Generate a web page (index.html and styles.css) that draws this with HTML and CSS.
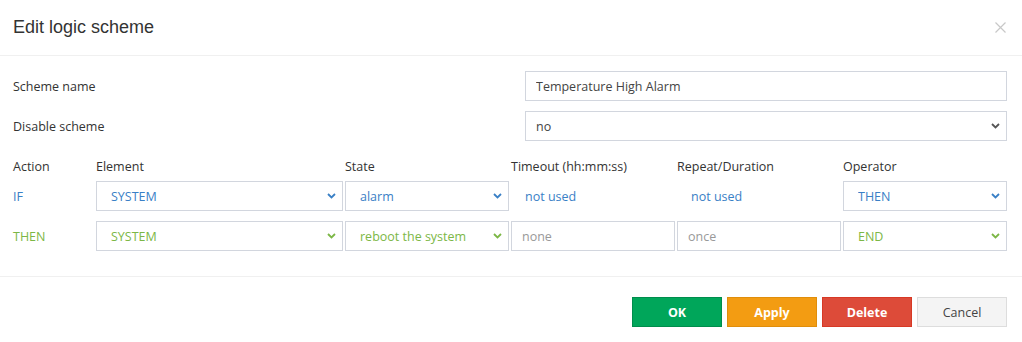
FILE: index.html
```html
<!DOCTYPE html>
<html lang="en">
<head>
    <meta charset="UTF-8">
    <title>Edit logic scheme</title>
    <link rel="stylesheet" href="styles.css">
</head>
<body>
    <div class="modal">
        <!-- Cabeçalho -->
        <div class="modal-header">
            <h4 class="modal-title">Edit logic scheme</h4>
            <button class="close" type="button" aria-label="Close">
                <svg width="11" height="11" viewBox="0 0 11 11">
                    <path d="M0.5 0.5 L10.5 10.5 M10.5 0.5 L0.5 10.5" stroke="#c8c8c8" stroke-width="1.2" fill="none"/>
                </svg>
            </button>
        </div>

        <!-- Corpo do formulário -->
        <div class="modal-body">
            <div class="form-row">
                <label class="form-label">Scheme name</label>
                <input class="field" type="text" value="Temperature High Alarm">
            </div>
            <div class="form-row">
                <label class="form-label">Disable scheme</label>
                <div class="select-wrap">
                    <select class="field field-select plain">
                        <option>no</option>
                        <option>yes</option>
                    </select>
                    <svg class="chevron" width="9" height="6" viewBox="0 0 9 6"><path d="M1 1 L4.5 4.5 L8 1" stroke="#555" stroke-width="1.8" fill="none"/></svg>
                </div>
            </div>

            <div class="rule-grid rule-head">
                <span>Action</span>
                <span>Element</span>
                <span>State</span>
                <span>Timeout (hh:mm:ss)</span>
                <span>Repeat/Duration</span>
                <span>Operator</span>
            </div>

            <div class="rule-grid rule-row if-row">
                <span class="action">IF</span>
                <div class="select-wrap">
                    <select class="field field-select"><option>SYSTEM</option></select>
                    <svg class="chevron" width="9" height="6" viewBox="0 0 9 6"><path d="M1 1 L4.5 4.5 L8 1" stroke="currentColor" stroke-width="1.8" fill="none"/></svg>
                </div>
                <div class="select-wrap">
                    <select class="field field-select"><option>alarm</option></select>
                    <svg class="chevron" width="9" height="6" viewBox="0 0 9 6"><path d="M1 1 L4.5 4.5 L8 1" stroke="currentColor" stroke-width="1.8" fill="none"/></svg>
                </div>
                <span class="not-used">not used</span>
                <span class="not-used">not used</span>
                <div class="select-wrap">
                    <select class="field field-select"><option>THEN</option></select>
                    <svg class="chevron" width="9" height="6" viewBox="0 0 9 6"><path d="M1 1 L4.5 4.5 L8 1" stroke="currentColor" stroke-width="1.8" fill="none"/></svg>
                </div>
            </div>

            <div class="rule-grid rule-row then-row">
                <span class="action">THEN</span>
                <div class="select-wrap">
                    <select class="field field-select"><option>SYSTEM</option></select>
                    <svg class="chevron" width="9" height="6" viewBox="0 0 9 6"><path d="M1 1 L4.5 4.5 L8 1" stroke="currentColor" stroke-width="1.8" fill="none"/></svg>
                </div>
                <div class="select-wrap">
                    <select class="field field-select"><option>reboot the system</option></select>
                    <svg class="chevron" width="9" height="6" viewBox="0 0 9 6"><path d="M1 1 L4.5 4.5 L8 1" stroke="currentColor" stroke-width="1.8" fill="none"/></svg>
                </div>
                <input class="field field-muted" type="text" value="none">
                <input class="field field-muted" type="text" value="once">
                <div class="select-wrap">
                    <select class="field field-select"><option>END</option></select>
                    <svg class="chevron" width="9" height="6" viewBox="0 0 9 6"><path d="M1 1 L4.5 4.5 L8 1" stroke="currentColor" stroke-width="1.8" fill="none"/></svg>
                </div>
            </div>
        </div>

        <!-- Rodapé com botões -->
        <div class="modal-footer">
            <button class="btn btn-ok">OK</button>
            <button class="btn btn-apply">Apply</button>
            <button class="btn btn-delete">Delete</button>
            <button class="btn btn-cancel">Cancel</button>
        </div>
    </div>
</body>
</html>
```

FILE: styles.css
```css
/* Página */
body {
    margin: 0;
    background-color: #fff;
    font-family: "Open Sans", "Noto Sans", Arial, sans-serif;
    font-size: 12.5px;
    color: #333;
}

.modal {
    width: 1022px;
    height: 342px;
    box-sizing: border-box;
}

/* Cabeçalho */
.modal-header {
    display: flex;
    align-items: center;
    justify-content: space-between;
    height: 55px;
    padding: 0 16px 0 13px;
    border-bottom: 1px solid #f0f0f0;
}

.modal-title {
    margin: 0;
    font-family: "Liberation Sans", Arial, sans-serif;
    font-size: 18px;
    font-weight: normal;
    color: #333;
}

.close {
    background: none;
    border: none;
    padding: 0;
    width: 11px;
    height: 11px;
    display: flex;
    cursor: pointer;
}

/* Corpo */
.modal-body {
    padding: 15px 15px 25px 13px;
}

.form-row {
    display: grid;
    grid-template-columns: 512px 1fr;
    align-items: center;
    height: 30px;
    margin-bottom: 10px;
}

.form-row + .form-row {
    margin-bottom: 15px;
}

.form-label {
    color: #333;
}

.field {
    box-sizing: border-box;
    width: 100%;
    height: 30px;
    margin: 0;
    padding: 0 10px;
    border: 1px solid #d2d6de;
    border-radius: 0;
    background-color: #fff;
    font-family: inherit;
    font-size: 12.5px;
    color: #444;
    outline: none;
}

.select-wrap {
    position: relative;
    height: 30px;
}

.field-select {
    appearance: none;
    -webkit-appearance: none;
    padding-left: 14px;
    color: inherit;
}

.field-select.plain {
    padding-left: 10px;
    color: #444;
}

.chevron {
    position: absolute;
    right: 7px;
    top: 12px;
    pointer-events: none;
}

/* Tabela de regras */
.rule-grid {
    display: grid;
    grid-template-columns: 81px 247px 164px 164px 164px 164px;
    column-gap: 2px;
    align-items: center;
}

.rule-head {
    height: 20px;
    margin-bottom: 5px;
}

.rule-row {
    height: 30px;
    margin-bottom: 10px;
}

.rule-row:last-child {
    margin-bottom: 0;
}

.if-row {
    color: #3a80c6;
}

.then-row {
    color: #7cb746;
}

.not-used {
    padding-left: 14px;
}

.field-muted {
    color: #999;
}

/* Rodapé */
.modal-footer {
    display: flex;
    justify-content: flex-end;
    gap: 5px;
    padding: 20px 15px 15px;
    border-top: 1px solid #f0f0f0;
}

.btn {
    width: 90px;
    height: 30px;
    border: 1px solid transparent;
    border-radius: 0;
    font-family: inherit;
    font-size: 12.5px;
    font-weight: bold;
    color: #fff;
    cursor: pointer;
}

.btn-ok {
    background-color: #00a65a;
    border-color: #008d4c;
}

.btn-apply {
    background-color: #f39c12;
    border-color: #e08e0b;
}

.btn-delete {
    background-color: #dd4b39;
    border-color: #d73925;
}

.btn-cancel {
    background-color: #f4f4f4;
    border-color: #ddd;
    color: #444;
    font-weight: normal;
}
```
